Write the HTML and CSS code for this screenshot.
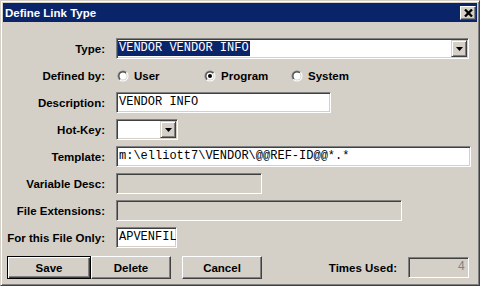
FILE: index.html
```html
<!DOCTYPE html>
<html>
<head>
<meta charset="utf-8">
<title>Define Link Type</title>
<link rel="stylesheet" href="styles.css">
</head>
<body>
<div class="window">
  <div class="titlebar">
    <span class="title">Define Link Type</span>
    <span class="close-btn">
      <svg width="9" height="8" viewBox="0 0 9 8"><path d="M1 0.5 L8 7.5 M8 0.5 L1 7.5" stroke="#000" stroke-width="2.3" fill="none"/></svg>
    </span>
  </div>
  <div class="content">
    <div class="form">
      <span class="lbl">Type:</span>
      <div class="field combo w-type">
        <span class="combo-text"><span class="sel">VENDOR VENDOR INFO</span></span>
        <span class="combo-btn"><svg width="7" height="4" viewBox="0 0 7 4"><polygon points="0,0 7,0 3.5,4" fill="#000"/></svg></span>
      </div>

      <span class="lbl">Defined by:</span>
      <div class="radios">
        <span class="radio">
          <svg class="rdo" width="12" height="12" viewBox="0 0 12 12">
            <defs>
              <linearGradient id="go" x1="0" y1="0" x2="1" y2="1"><stop offset="0.5" stop-color="#808080"/><stop offset="0.5" stop-color="#ffffff"/></linearGradient>
              <linearGradient id="gi" x1="0" y1="0" x2="1" y2="1"><stop offset="0.5" stop-color="#404040"/><stop offset="0.5" stop-color="#d4d0c8"/></linearGradient>
            </defs>
            <circle cx="6" cy="6" r="5.5" fill="url(#go)"/>
            <circle cx="6" cy="6" r="4.5" fill="url(#gi)"/>
            <circle cx="6" cy="6" r="3.5" fill="#fff"/>
          </svg>
          <span>User</span>
        </span>
        <span class="radio">
          <svg class="rdo" width="12" height="12" viewBox="0 0 12 12">
            <circle cx="6" cy="6" r="5.5" fill="url(#go)"/>
            <circle cx="6" cy="6" r="4.5" fill="url(#gi)"/>
            <circle cx="6" cy="6" r="3.5" fill="#fff"/>
            <circle cx="6" cy="6" r="2" fill="#000"/>
          </svg>
          <span>Program</span>
        </span>
        <span class="radio">
          <svg class="rdo" width="12" height="12" viewBox="0 0 12 12">
            <circle cx="6" cy="6" r="5.5" fill="url(#go)"/>
            <circle cx="6" cy="6" r="4.5" fill="url(#gi)"/>
            <circle cx="6" cy="6" r="3.5" fill="#fff"/>
          </svg>
          <span>System</span>
        </span>
      </div>

      <span class="lbl">Description:</span>
      <div class="field w-desc">VENDOR INFO</div>

      <span class="lbl">Hot-Key:</span>
      <div class="field combo w-hot">
        <span class="combo-text"></span>
        <span class="combo-btn"><svg width="7" height="4" viewBox="0 0 7 4"><polygon points="0,0 7,0 3.5,4" fill="#000"/></svg></span>
      </div>

      <span class="lbl">Template:</span>
      <div class="field w-tpl">m:\elliott7\VENDOR\@@REF-ID@@*.*</div>

      <span class="lbl">Variable Desc:</span>
      <div class="field disabled w-var"></div>

      <span class="lbl">File Extensions:</span>
      <div class="field disabled w-ext"></div>

      <span class="lbl">For this File Only:</span>
      <div class="field w-file">APVENFIL</div>
    </div>

    <div class="actions">
      <span class="btn default">Save</span>
      <span class="btn">Delete</span>
      <span class="btn gap">Cancel</span>
      <span class="spacer"></span>
      <span class="lbl">Times Used:</span>
      <div class="field disabled w-times">4</div>
    </div>
  </div>
</div>
</body>
</html>
```

FILE: styles.css
```css
html, body {
  margin: 0;
  padding: 0;
  background: #d4d0c8;
}

.window {
  width: 480px;
  height: 286px;
  box-sizing: border-box;
  background: #d4d0c8;
  border: 1px solid;
  border-color: #d4d0c8 #404040 #404040 #d4d0c8;
  box-shadow: inset 1px 1px #ffffff, inset -1px -1px #808080;
  padding: 2px;
  display: flex;
  flex-direction: column;
  font-family: "Liberation Sans", Arial, sans-serif;
  font-size: 11.5px;
  font-weight: bold;
  color: #000;
}

.titlebar {
  height: 19px;
  background: #0a246a;
  display: flex;
  align-items: center;
  justify-content: space-between;
  padding: 0 1px 0 2px;
}

.title {
  color: #fff;
  font-size: 11.5px;
  font-weight: bold;
}

.close-btn {
  width: 16px;
  height: 14px;
  box-sizing: border-box;
  background: #d4d0c8;
  border: 1px solid;
  border-color: #fff #404040 #404040 #fff;
  box-shadow: inset -1px -1px #808080;
  display: flex;
  align-items: center;
  justify-content: center;
}

.content {
  flex: 1;
  padding: 16px 8px 0 0;
  display: flex;
  flex-direction: column;
}

.form {
  display: grid;
  grid-template-columns: 102px 1fr;
  grid-auto-rows: 21px;
  column-gap: 11px;
  row-gap: 6px;
  align-items: center;
}

.lbl {
  text-align: right;
  white-space: nowrap;
}

.field {
  height: 21px;
  box-sizing: border-box;
  background: #fff;
  border: 1px solid;
  border-color: #808080 #fff #fff #808080;
  box-shadow: inset 1px 1px #404040, inset -1px -1px #d4d0c8;
  padding: 0 2px;
  font-family: "Liberation Mono", "Courier New", monospace;
  font-size: 12px;
  font-weight: normal;
  line-height: 19px;
  white-space: nowrap;
  overflow: hidden;
}

.field.disabled {
  background: #d4d0c8;
}

.combo {
  display: flex;
  align-items: center;
  padding: 1px;
}

.combo-text {
  flex: 1;
  padding-left: 0px;
  line-height: 15px;
}

.sel {
  background: #0a246a;
  color: #fff;
  padding: 0 1px;
  display: inline-block;
  line-height: 15px;
}

.combo-btn {
  width: 16px;
  height: 17px;
  box-sizing: border-box;
  background: #d4d0c8;
  border: 1px solid;
  border-color: #d4d0c8 #404040 #404040 #d4d0c8;
  box-shadow: inset 1px 1px #fff, inset -1px -1px #808080;
  display: flex;
  align-items: center;
  justify-content: center;
}

.w-type { width: 353px; }
.w-desc { width: 215px; }
.w-hot { width: 62px; }
.w-tpl { width: 355px; }
.w-var { width: 146px; }
.w-ext { width: 286px; }
.w-file { width: 61px; }

.radios {
  display: flex;
  align-items: center;
  padding-left: 1px;
}

.radio {
  width: 87px;
  display: flex;
  align-items: center;
  gap: 5px;
}

.rdo {
  flex: none;
}

.actions {
  margin-top: 8px;
  padding-left: 4px;
  display: flex;
  align-items: center;
}

.btn {
  width: 80px;
  height: 23px;
  box-sizing: border-box;
  background: #d4d0c8;
  border: 1px solid;
  border-color: #fff #404040 #404040 #fff;
  box-shadow: inset -1px -1px #808080, inset 1px 1px #d4d0c8;
  display: flex;
  align-items: center;
  justify-content: center;
}

.btn.default {
  width: 84px;
  border-color: #000;
  box-shadow: inset 1px 1px #fff, inset -1px -1px #404040, inset -2px -2px #808080;
}

.btn.gap {
  margin-left: 11px;
}

.spacer {
  flex: 1;
}

.w-times {
  width: 61px;
  margin-left: 11px;
  text-align: right;
  color: #808080;
  padding-right: 3px;
}
```
